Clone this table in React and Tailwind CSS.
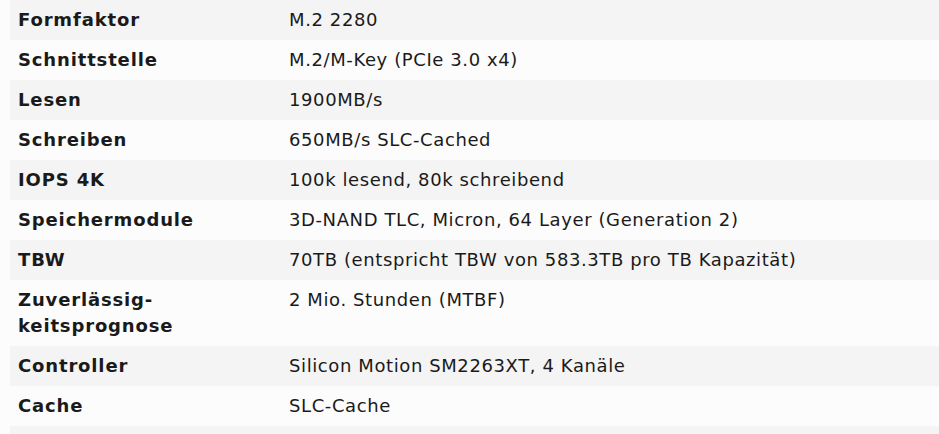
import React from "react";

const specs = [
  ["Formfaktor", "M.2 2280"],
  ["Schnittstelle", "M.2/M-Key (PCIe 3.0 x4)"],
  ["Lesen", "1900MB/s"],
  ["Schreiben", "650MB/s SLC-Cached"],
  ["IOPS 4K", "100k lesend, 80k schreibend"],
  ["Speichermodule", "3D-NAND TLC, Micron, 64 Layer (Generation 2)"],
  ["TBW", "70TB (entspricht TBW von 583.3TB pro TB Kapazität)"],
  ["Zuverlässig-\nkeitsprognose", "2 Mio. Stunden (MTBF)"],
  ["Controller", "Silicon Motion SM2263XT, 4 Kanäle"],
  ["Cache", "SLC-Cache"],
  ["", ""],
];

export default function App() {
  return (
    <div className="min-h-screen bg-[#fcfcfc] pl-[10px] font-['DejaVu_Sans',Verdana,sans-serif] text-[18px] tracking-[0.6px] text-[#1a1a1a]">
      <table className="w-full border-collapse">
        <tbody>
          {specs.map(([label, value], index) => (
            <tr key={index} className={index % 2 === 0 ? "bg-[#f4f4f4]" : "bg-[#fcfcfc]"}>
              <td className="w-[271px] px-2 py-[7px] align-top font-bold tracking-[0.85px] leading-[26px] whitespace-pre-line">{label}</td>
              <td className="px-2 py-[7px] align-top leading-[26px]">{value}</td>
            </tr>
          ))}
        </tbody>
      </table>
    </div>
  );
}
